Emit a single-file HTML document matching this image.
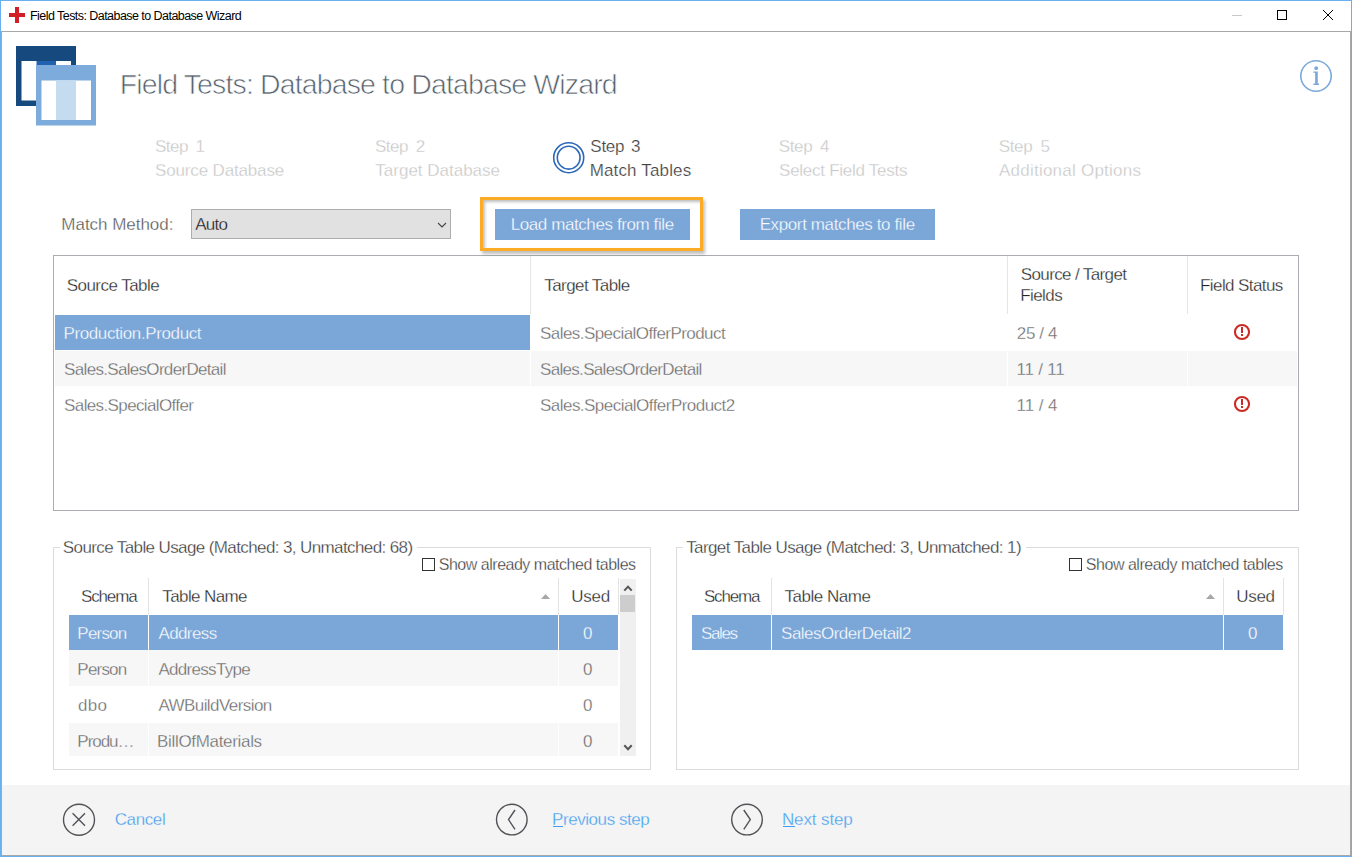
<!DOCTYPE html>
<html><head><meta charset="utf-8">
<style>
html,body{margin:0;padding:0;}
body{width:1352px;height:857px;position:relative;overflow:hidden;background:#fff;font-family:"Liberation Sans",sans-serif;}
.a{position:absolute;box-sizing:border-box;}
.t{position:absolute;white-space:pre;line-height:normal;font-family:"Liberation Sans",sans-serif;}
.t u{text-decoration:underline;text-underline-offset:2px;text-decoration-thickness:1px;}
svg{position:absolute;left:0;top:0;}
</style></head><body>
<!-- window frame -->
<div class="a" style="left:0;top:0;width:1352px;height:857px;border:1px solid #6aaff0;"></div>
<div class="a" style="left:1px;top:31px;width:1350px;height:825px;border:1px solid #a8a8a8;border-bottom-color:#a8a8a8;"></div>
<!-- footer -->
<div class="a" style="left:2px;top:785px;width:1348px;height:70px;background:#f4f4f4;"></div>

<!-- main table -->
<div class="a" style="left:53px;top:255px;width:1246px;height:256px;border:1px solid #abadb3;"></div>
<div class="a" style="left:530px;top:256px;width:1px;height:58px;background:#e6e6e6;"></div>
<div class="a" style="left:1007px;top:256px;width:1px;height:58px;background:#e6e6e6;"></div>
<div class="a" style="left:1187px;top:256px;width:1px;height:58px;background:#e6e6e6;"></div>
<div class="a" style="left:55px;top:315px;width:475px;height:35px;background:#7aa6d8;"></div>
<div class="a" style="left:55px;top:351px;width:475px;height:35px;background:#f7f7f7;"></div>
<div class="a" style="left:531px;top:351px;width:476px;height:35px;background:#f7f7f7;"></div>
<div class="a" style="left:1008px;top:351px;width:179px;height:35px;background:#f7f7f7;"></div>
<div class="a" style="left:1188px;top:351px;width:109px;height:35px;background:#f7f7f7;"></div>

<!-- group boxes -->
<div class="a" style="left:53px;top:547px;width:598px;height:223px;border:1px solid #dcdcdc;"></div>
<div class="a" style="left:60px;top:546px;width:357px;height:3px;background:#fff;"></div>
<div class="a" style="left:676px;top:547px;width:623px;height:223px;border:1px solid #dcdcdc;"></div>
<div class="a" style="left:683px;top:546px;width:343px;height:3px;background:#fff;"></div>
<div class="a" style="left:422px;top:558px;width:13px;height:13px;border:1px solid #333;"></div>
<div class="a" style="left:1069px;top:558px;width:13px;height:13px;border:1px solid #333;"></div>

<!-- source grid -->
<div class="a" style="left:148px;top:578px;width:1px;height:37px;background:#e3e3e3;"></div>
<div class="a" style="left:558px;top:578px;width:1px;height:37px;background:#e3e3e3;"></div>
<div class="a" style="left:618px;top:578px;width:1px;height:37px;background:#e3e3e3;"></div>
<div class="a" style="left:69px;top:615px;width:79px;height:35px;background:#7aa6d8;"></div>
<div class="a" style="left:149px;top:615px;width:409px;height:35px;background:#7aa6d8;"></div>
<div class="a" style="left:559px;top:615px;width:59px;height:35px;background:#7aa6d8;"></div>
<div class="a" style="left:69px;top:650px;width:79px;height:36px;background:#f7f7f7;"></div>
<div class="a" style="left:149px;top:650px;width:409px;height:36px;background:#f7f7f7;"></div>
<div class="a" style="left:559px;top:650px;width:59px;height:36px;background:#f7f7f7;"></div>
<div class="a" style="left:69px;top:723px;width:79px;height:33px;background:#f7f7f7;"></div>
<div class="a" style="left:149px;top:723px;width:409px;height:33px;background:#f7f7f7;"></div>
<div class="a" style="left:559px;top:723px;width:59px;height:33px;background:#f7f7f7;"></div>
<div class="a" style="left:620px;top:579px;width:16px;height:177px;background:#f0f0f0;"></div>
<div class="a" style="left:620px;top:595px;width:15px;height:17px;background:#cdcdcd;"></div>

<!-- target grid -->
<div class="a" style="left:771px;top:578px;width:1px;height:37px;background:#e3e3e3;"></div>
<div class="a" style="left:1223px;top:578px;width:1px;height:37px;background:#e3e3e3;"></div>
<div class="a" style="left:1283px;top:578px;width:1px;height:37px;background:#e3e3e3;"></div>
<div class="a" style="left:692px;top:615px;width:79px;height:35px;background:#7aa6d8;"></div>
<div class="a" style="left:772px;top:615px;width:451px;height:35px;background:#7aa6d8;"></div>
<div class="a" style="left:1224px;top:615px;width:59px;height:35px;background:#7aa6d8;"></div>

<!-- dropdown -->
<div class="a" style="left:191px;top:209px;width:260px;height:30px;border:1px solid #adadad;background:#e1e1e1;"></div>
<!-- orange highlight -->
<div class="a" style="left:480px;top:197px;width:223px;height:54px;border:3px solid #fbab25;box-shadow:2px 3px 3px rgba(0,0,0,0.25), inset 2px 2px 3px rgba(0,0,0,0.25);background:#fff;"></div>
<div class="a" style="left:495px;top:209px;width:195px;height:31px;background:#7aa6d8;"></div>
<div class="a" style="left:740px;top:209px;width:195px;height:31px;background:#7aa6d8;"></div>

<svg width="1352" height="857" viewBox="0 0 1352 857">
  <!-- red cross -->
  <rect x="15" y="7" width="4" height="16" fill="#d21f27"/>
  <rect x="9" y="13" width="16" height="4" fill="#d21f27"/>
  <!-- title buttons -->
  <rect x="1232" y="15" width="10" height="1" fill="#c8c8c8"/>
  <rect x="1277.5" y="10.5" width="9" height="9" fill="none" stroke="#000" stroke-width="1"/>
  <path d="M1323 10 L1333 20 M1333 10 L1323 20" stroke="#000" stroke-width="1" fill="none"/>
  <!-- logo -->
  <rect x="16" y="46" width="60" height="60" fill="#16497e"/>
  <rect x="21.5" y="61" width="49.5" height="39.5" fill="#fff"/>
  <rect x="36.5" y="61" width="19.5" height="4.5" fill="#2260b0"/>
  <rect x="36" y="65" width="60" height="60.5" fill="#7dacdc"/>
  <rect x="41.5" y="80.5" width="49.5" height="39.5" fill="#fff"/>
  <rect x="56" y="80.5" width="20" height="39.5" fill="#c5dbf0"/>
  <!-- info icon -->
  <circle cx="1316" cy="76" r="15.2" fill="none" stroke="#7aaadc" stroke-width="1.6"/>
  <circle cx="1316.2" cy="68.2" r="1.9" fill="#7aaadc"/>
  <path d="M1313.3 71.5 L1317.8 71.5 L1317.8 83.6 L1319.1 83.6 L1319.1 84.9 L1313.4 84.9 L1313.4 83.6 L1315.1 83.6 L1315.1 72.7 L1313.3 72.7 Z" fill="#7aaadc"/>
  <!-- step 3 circle -->
  <circle cx="568.7" cy="157.7" r="15" fill="none" stroke="#2b69b8" stroke-width="1.6"/>
  <circle cx="568.7" cy="157.7" r="11.4" fill="none" stroke="#2b69b8" stroke-width="1.6"/>
  <!-- dropdown chevron -->
  <path d="M438 223 L442 227 L446 223" fill="none" stroke="#444" stroke-width="1.1"/>
  <!-- warning icons -->
  <g fill="none" stroke="#cc2b25" stroke-width="2.1">
    <circle cx="1242" cy="332" r="7.05"/>
    <circle cx="1242" cy="404" r="7.05"/>
  </g>
  <g fill="#cc2b25">
    <rect x="1241" y="327" width="2" height="6"/>
    <rect x="1241" y="334" width="2" height="2"/>
    <rect x="1241" y="399" width="2" height="6"/>
    <rect x="1241" y="406" width="2" height="2"/>
  </g>
  <!-- sort arrows -->
  <path d="M541 599 L545.5 594 L550 599 Z" fill="#a8a8a8"/>
  <path d="M1206 599 L1210.5 594 L1215 599 Z" fill="#a8a8a8"/>
  <!-- scrollbar arrows -->
  <path d="M624.3 590.6 L628 586.6 L631.7 590.6" fill="none" stroke="#555" stroke-width="2"/>
  <path d="M624.3 745.2 L628 749.2 L631.7 745.2" fill="none" stroke="#555" stroke-width="2"/>
  <!-- footer icons -->
  <g fill="none" stroke="#515357" stroke-width="1.4">
    <circle cx="79" cy="819.8" r="15.5"/>
    <path d="M72.6 813.3 L85 825.7 M85 813.3 L72.6 825.7"/>
    <circle cx="511.8" cy="819.6" r="15.3"/>
    <path d="M515 810 L508.5 819.6 L515 829.3"/>
    <circle cx="747" cy="819.6" r="15.3"/>
    <path d="M743.8 810 L750.3 819.6 L743.8 829.3"/>
  </g>
</svg>
<div class="a" style="left:553px;top:826px;width:10px;height:1px;background:#419ef0;"></div>
<div class="a" style="left:783px;top:826px;width:12px;height:1px;background:#419ef0;"></div>
<div class="t" style="left:30.00px;top:8.69px;font-size:12.5px;letter-spacing:-0.550px;color:#000">Field Tests: Database to Database Wizard</div>
<div class="t" style="left:119.72px;top:68.21px;font-size:28.5px;letter-spacing:-0.866px;color:#56616c;-webkit-text-stroke:0.7px #fff">Field Tests: Database to Database Wizard</div>
<div class="t" style="left:155.02px;top:136.62px;font-size:17px;letter-spacing:-0.526px;color:#c6c6c6;-webkit-text-stroke:0.3px #fff">Step</div>
<div class="t" style="left:195.41px;top:136.62px;font-size:17px;letter-spacing:-1.780px;color:#c6c6c6;-webkit-text-stroke:0.3px #fff">1</div>
<div class="t" style="left:155.02px;top:160.62px;font-size:17px;letter-spacing:-0.155px;color:#c6c6c6;-webkit-text-stroke:0.3px #fff">Source Database</div>
<div class="t" style="left:375.02px;top:136.62px;font-size:17px;letter-spacing:-0.526px;color:#c6c6c6;-webkit-text-stroke:0.3px #fff">Step</div>
<div class="t" style="left:415.75px;top:136.62px;font-size:17px;letter-spacing:0.480px;color:#c6c6c6;-webkit-text-stroke:0.3px #fff">2</div>
<div class="t" style="left:375.36px;top:160.62px;font-size:17px;letter-spacing:-0.006px;color:#c6c6c6;-webkit-text-stroke:0.3px #fff">Target Database</div>
<div class="t" style="left:590.32px;top:136.62px;font-size:17px;letter-spacing:-0.259px;color:#444;-webkit-text-stroke:0.2px #fff">Step</div>
<div class="t" style="left:631.09px;top:136.62px;font-size:17px;letter-spacing:0.570px;color:#444;-webkit-text-stroke:0.2px #fff">3</div>
<div class="t" style="left:589.64px;top:160.62px;font-size:17px;letter-spacing:0.156px;color:#444;-webkit-text-stroke:0.2px #fff">Match Tables</div>
<div class="t" style="left:778.72px;top:136.62px;font-size:17px;letter-spacing:-0.359px;color:#c6c6c6;-webkit-text-stroke:0.3px #fff">Step</div>
<div class="t" style="left:819.96px;top:136.62px;font-size:17px;letter-spacing:0.730px;color:#c6c6c6;-webkit-text-stroke:0.3px #fff">4</div>
<div class="t" style="left:779.12px;top:160.62px;font-size:17px;letter-spacing:-0.272px;color:#c6c6c6;-webkit-text-stroke:0.3px #fff">Select Field Tests</div>
<div class="t" style="left:998.72px;top:136.62px;font-size:17px;letter-spacing:-0.359px;color:#c6c6c6;-webkit-text-stroke:0.3px #fff">Step</div>
<div class="t" style="left:1040.52px;top:136.62px;font-size:17px;letter-spacing:-0.560px;color:#c6c6c6;-webkit-text-stroke:0.3px #fff">5</div>
<div class="t" style="left:999.00px;top:160.62px;font-size:17px;letter-spacing:0.231px;color:#c6c6c6;-webkit-text-stroke:0.3px #fff">Additional Options</div>
<div class="t" style="left:61.34px;top:214.62px;font-size:17px;letter-spacing:-0.032px;color:#505050;-webkit-text-stroke:0.3px #fff">Match Method:</div>
<div class="t" style="left:195.20px;top:214.62px;font-size:17px;letter-spacing:-0.752px;color:#111;-webkit-text-stroke:0.3px #e1e1e1">Auto</div>
<div class="t" style="left:510.64px;top:214.62px;font-size:17px;letter-spacing:-0.404px;color:#fff;-webkit-text-stroke:0.3px #7aa6d8">Load matches from file</div>
<div class="t" style="left:759.64px;top:214.62px;font-size:17px;letter-spacing:-0.380px;color:#fff;-webkit-text-stroke:0.3px #7aa6d8">Export matches to file</div>
<div class="t" style="left:66.72px;top:275.62px;font-size:17px;letter-spacing:-0.539px;color:#222;-webkit-text-stroke:0.3px #fff">Source Table</div>
<div class="t" style="left:544.26px;top:275.62px;font-size:17px;letter-spacing:-0.578px;color:#222;-webkit-text-stroke:0.3px #fff">Target Table</div>
<div class="t" style="left:1020.82px;top:264.62px;font-size:17px;letter-spacing:-0.631px;color:#222;-webkit-text-stroke:0.3px #fff">Source / Target</div>
<div class="t" style="left:1020.14px;top:285.62px;font-size:17px;letter-spacing:-0.555px;color:#222;-webkit-text-stroke:0.3px #fff">Fields</div>
<div class="t" style="left:1200.04px;top:275.62px;font-size:17px;letter-spacing:-0.590px;color:#222;-webkit-text-stroke:0.3px #fff">Field Status</div>
<div class="t" style="left:63.44px;top:323.62px;font-size:17px;letter-spacing:-0.380px;color:#fff;-webkit-text-stroke:0.3px #7aa6d8">Production.Product</div>
<div class="t" style="left:540.02px;top:323.62px;font-size:17px;letter-spacing:-0.559px;color:#666;-webkit-text-stroke:0.3px #fff">Sales.SpecialOfferProduct</div>
<div class="t" style="left:1016.85px;top:323.62px;font-size:17px;letter-spacing:-0.388px;color:#666;-webkit-text-stroke:0.3px #fff">25 / 4</div>
<div class="t" style="left:64.12px;top:359.62px;font-size:17px;letter-spacing:-0.684px;color:#666;-webkit-text-stroke:0.3px #f7f7f7">Sales.SalesOrderDetail</div>
<div class="t" style="left:540.02px;top:359.62px;font-size:17px;letter-spacing:-0.684px;color:#666;-webkit-text-stroke:0.3px #f7f7f7">Sales.SalesOrderDetail</div>
<div class="t" style="left:1016.51px;top:359.62px;font-size:17px;letter-spacing:-0.198px;color:#666;-webkit-text-stroke:0.3px #f7f7f7">11 / 11</div>
<div class="t" style="left:64.12px;top:395.62px;font-size:17px;letter-spacing:-0.628px;color:#666;-webkit-text-stroke:0.3px #fff">Sales.SpecialOffer</div>
<div class="t" style="left:540.02px;top:395.62px;font-size:17px;letter-spacing:-0.534px;color:#666;-webkit-text-stroke:0.3px #fff">Sales.SpecialOfferProduct2</div>
<div class="t" style="left:1016.51px;top:395.62px;font-size:17px;letter-spacing:-0.067px;color:#666;-webkit-text-stroke:0.3px #fff">11 / 4</div>
<div class="t" style="left:62.82px;top:537.62px;font-size:17px;letter-spacing:-0.609px;color:#333;-webkit-text-stroke:0.3px #fff">Source Table Usage (Matched: 3, Unmatched: 68)</div>
<div class="t" style="left:686.16px;top:537.62px;font-size:17px;letter-spacing:-0.595px;color:#333;-webkit-text-stroke:0.3px #fff">Target Table Usage (Matched: 3, Unmatched: 1)</div>
<div class="t" style="left:438.76px;top:555.52px;font-size:16px;letter-spacing:-0.484px;color:#333;-webkit-text-stroke:0.3px #fff">Show already matched tables</div>
<div class="t" style="left:1085.86px;top:555.52px;font-size:16px;letter-spacing:-0.484px;color:#333;-webkit-text-stroke:0.3px #fff">Show already matched tables</div>
<div class="t" style="left:81.02px;top:586.62px;font-size:17px;letter-spacing:-1.150px;color:#222;-webkit-text-stroke:0.3px #fff">Schema</div>
<div class="t" style="left:162.36px;top:586.62px;font-size:17px;letter-spacing:-0.617px;color:#222;-webkit-text-stroke:0.3px #fff">Table Name</div>
<div class="t" style="left:571.31px;top:586.62px;font-size:17px;letter-spacing:-0.280px;color:#222;-webkit-text-stroke:0.3px #fff">Used</div>
<div class="t" style="left:77.34px;top:623.62px;font-size:17px;letter-spacing:-0.790px;color:#fff;-webkit-text-stroke:0.3px #7aa6d8">Person</div>
<div class="t" style="left:158.40px;top:623.62px;font-size:17px;letter-spacing:-0.592px;color:#fff;-webkit-text-stroke:0.3px #7aa6d8">Address</div>
<div class="t" style="left:583.09px;top:623.62px;font-size:17px;letter-spacing:-0.430px;color:#fff;-webkit-text-stroke:0.3px #7aa6d8">0</div>
<div class="t" style="left:77.34px;top:659.62px;font-size:17px;letter-spacing:-0.790px;color:#666;-webkit-text-stroke:0.3px #f7f7f7">Person</div>
<div class="t" style="left:158.40px;top:659.62px;font-size:17px;letter-spacing:-0.690px;color:#666;-webkit-text-stroke:0.3px #f7f7f7">AddressType</div>
<div class="t" style="left:583.09px;top:659.62px;font-size:17px;letter-spacing:-0.430px;color:#666;-webkit-text-stroke:0.3px #f7f7f7">0</div>
<div class="t" style="left:78.02px;top:695.62px;font-size:17px;letter-spacing:0.315px;color:#666;-webkit-text-stroke:0.3px #fff">dbo</div>
<div class="t" style="left:158.40px;top:695.62px;font-size:17px;letter-spacing:-0.569px;color:#666;-webkit-text-stroke:0.3px #fff">AWBuildVersion</div>
<div class="t" style="left:583.09px;top:695.62px;font-size:17px;letter-spacing:-0.430px;color:#666;-webkit-text-stroke:0.3px #fff">0</div>
<div class="t" style="left:77.34px;top:731.62px;font-size:17px;letter-spacing:-1.039px;color:#666;-webkit-text-stroke:0.3px #f7f7f7">Produ…</div>
<div class="t" style="left:157.04px;top:731.62px;font-size:17px;letter-spacing:-0.322px;color:#666;-webkit-text-stroke:0.3px #f7f7f7">BillOfMaterials</div>
<div class="t" style="left:583.09px;top:731.62px;font-size:17px;letter-spacing:-0.430px;color:#666;-webkit-text-stroke:0.3px #f7f7f7">0</div>
<div class="t" style="left:703.92px;top:586.62px;font-size:17px;letter-spacing:-1.150px;color:#222;-webkit-text-stroke:0.3px #fff">Schema</div>
<div class="t" style="left:784.46px;top:586.62px;font-size:17px;letter-spacing:-0.462px;color:#222;-webkit-text-stroke:0.3px #fff">Table Name</div>
<div class="t" style="left:1236.31px;top:586.62px;font-size:17px;letter-spacing:-0.347px;color:#222;-webkit-text-stroke:0.3px #fff">Used</div>
<div class="t" style="left:700.92px;top:623.62px;font-size:17px;letter-spacing:-1.359px;color:#fff;-webkit-text-stroke:0.3px #7aa6d8">Sales</div>
<div class="t" style="left:781.12px;top:623.62px;font-size:17px;letter-spacing:-0.527px;color:#fff;-webkit-text-stroke:0.3px #7aa6d8">SalesOrderDetail2</div>
<div class="t" style="left:1248.09px;top:623.62px;font-size:17px;letter-spacing:-0.430px;color:#fff;-webkit-text-stroke:0.3px #7aa6d8">0</div>
<div class="t" style="left:114.75px;top:809.62px;font-size:17px;letter-spacing:-0.402px;color:#419ef0;-webkit-text-stroke:0.3px #f4f4f4">Cancel</div>
<div class="t" style="left:552.04px;top:809.62px;font-size:17px;letter-spacing:-0.435px;color:#419ef0;-webkit-text-stroke:0.3px #f4f4f4">Previous step</div>
<div class="t" style="left:781.94px;top:809.62px;font-size:17px;letter-spacing:-0.117px;color:#419ef0;-webkit-text-stroke:0.3px #f4f4f4">Next step</div>
</body></html>
